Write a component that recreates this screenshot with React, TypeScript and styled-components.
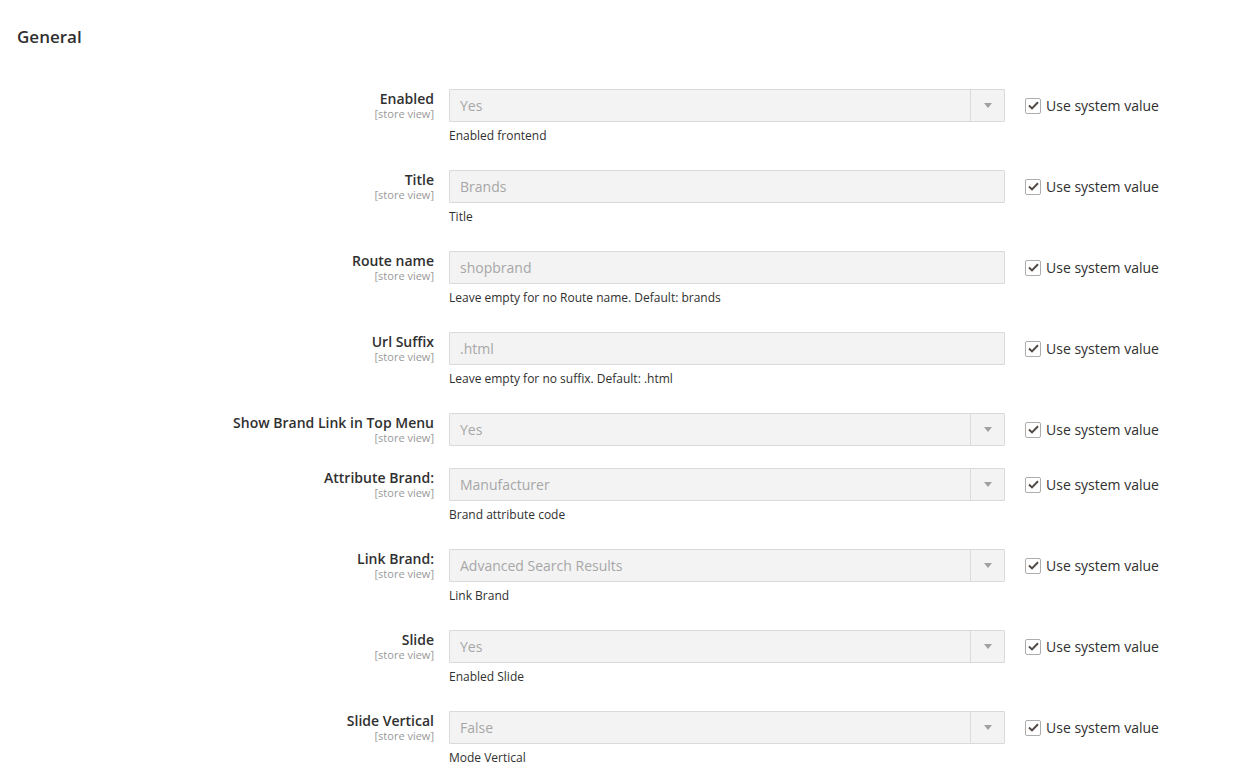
import React from "react";
import styled, { createGlobalStyle } from "styled-components";

const GlobalStyle = createGlobalStyle`
  body {
    margin: 0;
    background: #ffffff;
    font-family: "Open Sans", "Liberation Sans", Arial, sans-serif;
    color: #303030;
  }
`;

const Page = styled.div`
  width: 1236px;
  padding: 27px 0 0 17px;
  box-sizing: border-box;
`;

const Heading = styled.h2`
  margin: 0 0 42px;
  font-size: 17px;
  line-height: 20px;
  font-weight: 600;
  color: #303030;
`;

const Row = styled.div`
  display: grid;
  grid-template-columns: 417px 556px auto;
  column-gap: 15px;
  padding-bottom: 22px;
`;

const Label = styled.div`
  padding-top: 1px;
  text-align: right;
  font-size: 14px;
  line-height: 18px;
  font-weight: 600;
  color: #303030;
`;

const Scope = styled.span`
  display: block;
  font-size: 11px;
  line-height: 11px;
  font-weight: 400;
  color: #999999;
`;

const Control = styled.div`
  display: flex;
  flex-direction: column;
`;

const Field = styled.div`
  position: relative;
  height: 33px;
  box-sizing: border-box;
  border: 1px solid #dadada;
  border-radius: 1px;
  background: #f3f3f3;
  display: flex;
  align-items: center;
  padding-left: 10px;
  font-size: 14px;
  color: #a7a7a7;
`;

const Arrow = styled.div`
  position: absolute;
  top: 0;
  right: 0;
  bottom: 0;
  width: 33px;
  border-left: 1px solid #dadada;
  display: flex;
  align-items: center;
  justify-content: center;

  &::after {
    content: "";
    border-left: 4px solid transparent;
    border-right: 4px solid transparent;
    border-top: 5px solid #a0a0a0;
  }
`;

const Note = styled.div`
  margin-top: 2px;
  font-size: 12px;
  line-height: 24px;
  color: #303030;
`;

const SystemValue = styled.label`
  display: flex;
  align-items: center;
  gap: 5px;
  margin-left: 5px;
  height: 33px;
  font-size: 14px;
  color: #303030;
`;

const Box = styled.span`
  width: 16px;
  height: 16px;
  box-sizing: border-box;
  border: 1px solid #adadad;
  border-radius: 2px;
  background: #fff;
  display: flex;
  align-items: center;
  justify-content: center;
`;

type FieldDef = {
  label: string;
  value: string;
  select?: boolean;
  note?: string;
};

const fields: FieldDef[] = [
  { label: "Enabled", value: "Yes", select: true, note: "Enabled frontend" },
  { label: "Title", value: "Brands", note: "Title" },
  { label: "Route name", value: "shopbrand", note: "Leave empty for no Route name. Default: brands" },
  { label: "Url Suffix", value: ".html", note: "Leave empty for no suffix. Default: .html" },
  { label: "Show Brand Link in Top Menu", value: "Yes", select: true },
  { label: "Attribute Brand:", value: "Manufacturer", select: true, note: "Brand attribute code" },
  { label: "Link Brand:", value: "Advanced Search Results", select: true, note: "Link Brand" },
  { label: "Slide", value: "Yes", select: true, note: "Enabled Slide" },
  { label: "Slide Vertical", value: "False", select: true, note: "Mode Vertical" },
];

const Check = () => (
  <svg width="11" height="9" viewBox="0 0 11 9">
    <path d="M1 4.6 L4 7.4 L10 1.2" fill="none" stroke="#514943" strokeWidth="2" />
  </svg>
);

export default function App() {
  return (
    <Page>
      <GlobalStyle />
      <Heading>General</Heading>
      {fields.map((f) => (
        <Row key={f.label}>
          <Label>
            {f.label}
            <Scope>[store view]</Scope>
          </Label>
          <Control>
            <Field>
              {f.value}
              {f.select && <Arrow />}
            </Field>
            {f.note && <Note>{f.note}</Note>}
          </Control>
          <SystemValue>
            <Box>
              <Check />
            </Box>
            Use system value
          </SystemValue>
        </Row>
      ))}
    </Page>
  );
}
